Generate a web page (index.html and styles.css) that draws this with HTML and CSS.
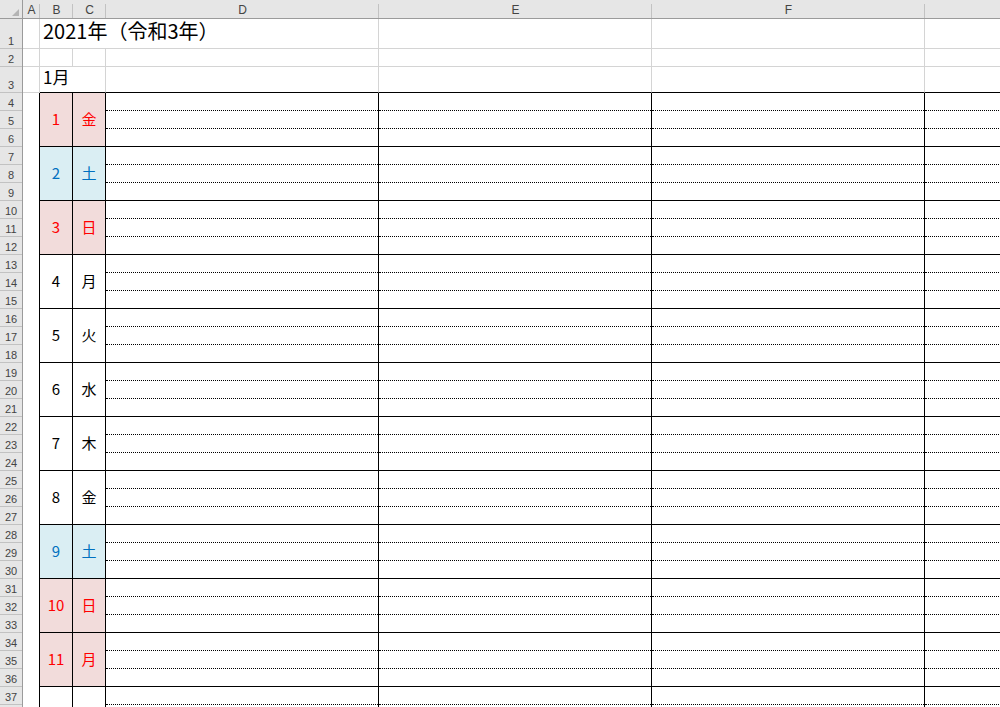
FILE: index.html
```html
<!DOCTYPE html>
<html lang="ja">
<head>
  <meta charset="UTF-8" />
  <title>2021年 カレンダー</title>
  <link rel="stylesheet" href="styles.css">
</head>
<body>
  <div class="sheet">
    <!-- column headers -->
    <div class="corner">
      <svg width="7" height="7" viewBox="0 0 7 7"><polygon points="7,0 7,7 0,7" fill="#b4b4b4"/></svg>
    </div>
    <div class="ch">A</div>
    <div class="ch">B</div>
    <div class="ch">C</div>
    <div class="ch">D</div>
    <div class="ch">E</div>
    <div class="ch">F</div>
    <div class="ch">G</div>

    <!-- row 1 -->
    <div class="rh"><span>1</span></div>
    <div class="cell"></div>
    <div class="cell title">2021年（令和3年）</div>
    <div class="cell"></div>
    <div class="cell"></div>
    <div class="cell"></div>

    <!-- row 2 -->
    <div class="rh"><span>2</span></div>
    <div class="cell"></div>
    <div class="cell"></div>
    <div class="cell"></div>
    <div class="cell"></div>
    <div class="cell"></div>
    <div class="cell"></div>
    <div class="cell"></div>

    <!-- row 3 -->
    <div class="rh"><span>3</span></div>
    <div class="cell"></div>
    <div class="cell month top">1月</div>
    <div class="cell top"></div>
    <div class="cell top"></div>
    <div class="cell top"></div>
    <div class="cell top"></div>

    <!-- days -->
    <div class="rh"><span>4</span><span>5</span><span>6</span></div>
    <div class="a"></div>
    <div class="day hol">1</div><div class="day hol">金</div>
    <div class="memo"><i></i><i></i></div><div class="memo"><i></i><i></i></div><div class="memo"><i></i><i></i></div><div class="memo"><i></i><i></i></div>

    <div class="rh"><span>7</span><span>8</span><span>9</span></div>
    <div class="a"></div>
    <div class="day sat">2</div><div class="day sat">土</div>
    <div class="memo"><i></i><i></i></div><div class="memo"><i></i><i></i></div><div class="memo"><i></i><i></i></div><div class="memo"><i></i><i></i></div>

    <div class="rh"><span>10</span><span>11</span><span>12</span></div>
    <div class="a"></div>
    <div class="day hol">3</div><div class="day hol">日</div>
    <div class="memo"><i></i><i></i></div><div class="memo"><i></i><i></i></div><div class="memo"><i></i><i></i></div><div class="memo"><i></i><i></i></div>

    <div class="rh"><span>13</span><span>14</span><span>15</span></div>
    <div class="a"></div>
    <div class="day">4</div><div class="day">月</div>
    <div class="memo"><i></i><i></i></div><div class="memo"><i></i><i></i></div><div class="memo"><i></i><i></i></div><div class="memo"><i></i><i></i></div>

    <div class="rh"><span>16</span><span>17</span><span>18</span></div>
    <div class="a"></div>
    <div class="day">5</div><div class="day">火</div>
    <div class="memo"><i></i><i></i></div><div class="memo"><i></i><i></i></div><div class="memo"><i></i><i></i></div><div class="memo"><i></i><i></i></div>

    <div class="rh"><span>19</span><span>20</span><span>21</span></div>
    <div class="a"></div>
    <div class="day">6</div><div class="day">水</div>
    <div class="memo"><i></i><i></i></div><div class="memo"><i></i><i></i></div><div class="memo"><i></i><i></i></div><div class="memo"><i></i><i></i></div>

    <div class="rh"><span>22</span><span>23</span><span>24</span></div>
    <div class="a"></div>
    <div class="day">7</div><div class="day">木</div>
    <div class="memo"><i></i><i></i></div><div class="memo"><i></i><i></i></div><div class="memo"><i></i><i></i></div><div class="memo"><i></i><i></i></div>

    <div class="rh"><span>25</span><span>26</span><span>27</span></div>
    <div class="a"></div>
    <div class="day">8</div><div class="day">金</div>
    <div class="memo"><i></i><i></i></div><div class="memo"><i></i><i></i></div><div class="memo"><i></i><i></i></div><div class="memo"><i></i><i></i></div>

    <div class="rh"><span>28</span><span>29</span><span>30</span></div>
    <div class="a"></div>
    <div class="day sat">9</div><div class="day sat">土</div>
    <div class="memo"><i></i><i></i></div><div class="memo"><i></i><i></i></div><div class="memo"><i></i><i></i></div><div class="memo"><i></i><i></i></div>

    <div class="rh"><span>31</span><span>32</span><span>33</span></div>
    <div class="a"></div>
    <div class="day hol">10</div><div class="day hol">日</div>
    <div class="memo"><i></i><i></i></div><div class="memo"><i></i><i></i></div><div class="memo"><i></i><i></i></div><div class="memo"><i></i><i></i></div>

    <div class="rh"><span>34</span><span>35</span><span>36</span></div>
    <div class="a"></div>
    <div class="day hol">11</div><div class="day hol">月</div>
    <div class="memo"><i></i><i></i></div><div class="memo"><i></i><i></i></div><div class="memo"><i></i><i></i></div><div class="memo"><i></i><i></i></div>

    <div class="rh"><span>37</span><span>38</span><span>39</span></div>
    <div class="a"></div>
    <div class="day">12</div><div class="day">火</div>
    <div class="memo"><i></i><i></i></div><div class="memo"><i></i><i></i></div><div class="memo"><i></i><i></i></div><div class="memo"><i></i><i></i></div>
  </div>
</body>
</html>
```

FILE: styles.css
```css
body {
  margin: 0;
  background: #fff;
  overflow: hidden;
}

.sheet {
  display: grid;
  width: 1200px;
  grid-template-columns: 23px 17px 33px 33px 273px 273px 273px 1fr;
  grid-template-rows: 19px 30px 18px 26px;
  grid-auto-rows: 54px;
  font-family: "Noto Sans CJK JP", "Noto Sans", sans-serif;
  color: #000;
}

.sheet > div {
  box-sizing: border-box;
  min-width: 0;
}

/* headers */
.corner {
  background: #e6e6e6;
  border-right: 1px solid #9b9b9b;
  border-bottom: 1px solid #9b9b9b;
  display: flex;
  align-items: flex-end;
  justify-content: flex-end;
  padding: 0 3px 2px 0;
}

.corner svg {
  display: block;
}

.ch {
  background: #e6e6e6 linear-gradient(#c2c2c2, #c2c2c2) right 4px / 1px 14px no-repeat;
  border-bottom: 1px solid #9b9b9b;
  display: flex;
  align-items: center;
  justify-content: center;
  font-family: "Liberation Sans", Arial, sans-serif;
  font-size: 12px;
  color: #444;
  padding-top: 1px;
}

.rh {
  background: #e6e6e6;
  border-right: 1px solid #9b9b9b;
  display: flex;
  flex-direction: column;
}

.rh span {
  flex: 1;
  display: flex;
  align-items: flex-end;
  justify-content: center;
  border-bottom: 1px solid #c2c2c2;
  font-family: "Liberation Sans", Arial, sans-serif;
  font-size: 11px;
  line-height: 1;
  color: #444;
  padding-bottom: 1px;
}

/* plain cells */
.cell {
  border-right: 1px solid #d4d4d4;
  border-bottom: 1px solid #d4d4d4;
}

.cell.top {
  border-bottom-color: #000;
}

.title {
  grid-column: span 3;
  display: flex;
  align-items: flex-end;
  padding: 0 0 5px 3px;
  font-size: 20px;
  line-height: 1.2;
  white-space: nowrap;
}

.month {
  grid-column: span 2;
  display: flex;
  align-items: flex-end;
  padding: 0 0 5px 3px;
  font-size: 17px;
  line-height: 1.2;
  white-space: nowrap;
}

/* day blocks */
.a {
  border-right: 1px solid #000;
}

.day {
  border-right: 1px solid #000;
  border-bottom: 1px solid #000;
  display: flex;
  align-items: center;
  justify-content: center;
  font-size: 15px;
  padding-bottom: 3px;
}

.day.hol {
  background: #f2dcdb;
  color: #ff0000;
}

.day.sat {
  background: #daeef3;
  color: #0070c0;
}

.memo {
  border-right: 1px solid #000;
  border-bottom: 1px solid #000;
  display: flex;
  flex-direction: column;
}

.memo i {
  height: 18px;
  box-sizing: border-box;
  border-bottom: 1px dotted #000;
}
```
